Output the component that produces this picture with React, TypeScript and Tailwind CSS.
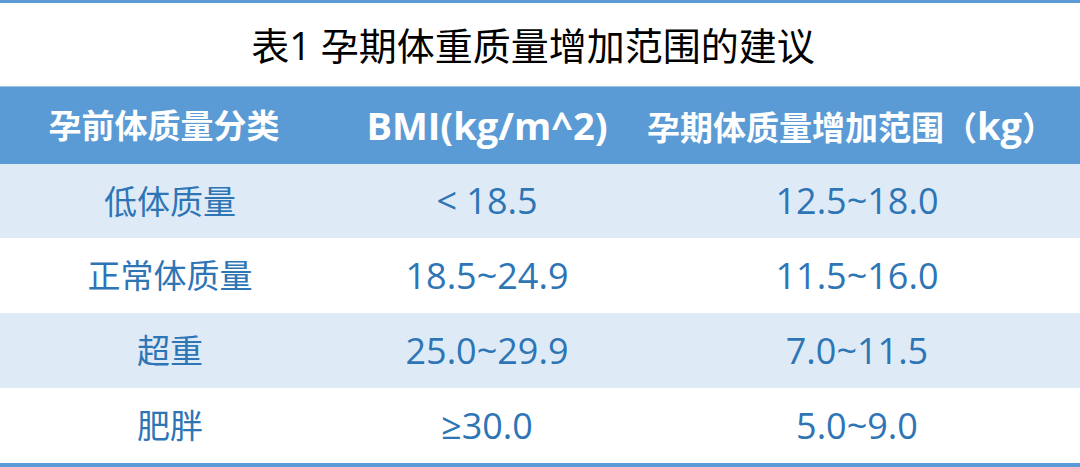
const rows = [
  { cat: "低体质量", bmi: "< 18.5", gain: "12.5~18.0", shaded: true },
  { cat: "正常体质量", bmi: "18.5~24.9", gain: "11.5~16.0", shaded: false },
  { cat: "超重", bmi: "25.0~29.9", gain: "7.0~11.5", shaded: true },
  { cat: "肥胖", bmi: "≥30.0", gain: "5.0~9.0", shaded: false },
];

const font = "font-['Open_Sans','Noto_Sans_CJK_SC',sans-serif]";

export default function App() {
  return (
    <div className={`w-[1080px] h-[467px] bg-white flex flex-col ${font}`}>
      <div className="h-[3px] bg-[#5b9bd5]" />
      <div className="h-[84px] flex items-center justify-center pr-[14px]">
        <h1 className="text-[38px] text-black leading-none font-normal">
          表1 孕期体重质量增加范围的建议
        </h1>
      </div>
      {/* 表头 */}
      <div className="grid grid-cols-[340px_294px_1fr] h-[78px] bg-[#5b9bd5] border-t border-[#9cc3e6] text-white font-bold items-center text-center leading-none">
        <div className="text-[33px] pr-[12px]">孕前体质量分类</div>
        <div className="text-[38px]">BMI(kg/m^2)</div>
        <div className="text-[33px] pr-[12px]">
          孕期体质量增加范围（<span className="text-[38px]">kg</span>）
        </div>
      </div>
      {rows.map((r) => (
        <div
          key={r.cat}
          className={`grid grid-cols-[340px_294px_1fr] h-[75.5px] items-center text-center text-[#2e75b6] leading-none ${
            r.shaded ? "bg-[#deebf7]" : "bg-white"
          }`}
        >
          <div className="text-[33px]">{r.cat}</div>
          <div className="text-[36px]">{r.bmi}</div>
          <div className="text-[36px]">{r.gain}</div>
        </div>
      ))}
      <div className="flex-1 bg-white" />
      <div className="h-[4px] bg-[#5b9bd5]" />
    </div>
  );
}
